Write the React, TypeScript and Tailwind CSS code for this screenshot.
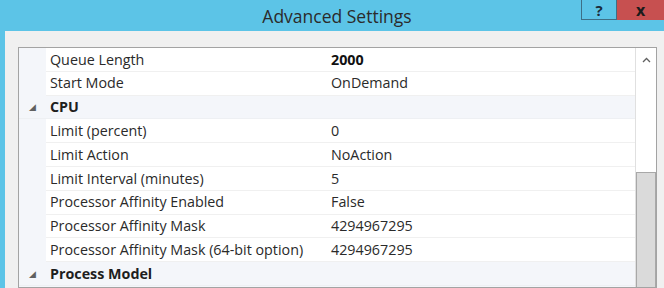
import React from "react";

type Row = { label: string; value?: string; bold?: boolean; category?: boolean };

const rows: Row[] = [
  { label: "Queue Length", value: "2000", bold: true },
  { label: "Start Mode", value: "OnDemand" },
  { label: "CPU", category: true },
  { label: "Limit (percent)", value: "0" },
  { label: "Limit Action", value: "NoAction" },
  { label: "Limit Interval (minutes)", value: "5" },
  { label: "Processor Affinity Enabled", value: "False" },
  { label: "Processor Affinity Mask", value: "4294967295" },
  { label: "Processor Affinity Mask (64-bit option)", value: "4294967295" },
  { label: "Process Model", category: true },
];

const font = { fontFamily: '"Open Sans", "Noto Sans", sans-serif' };

export default function App() {
  return (
    <div className="w-[664px] h-[288px] overflow-hidden bg-[#5cc4e7] flex flex-col" style={font}>
      {/* title bar */}
      <div className="relative h-[31px] shrink-0 flex items-center justify-center">
        <span className="text-[17.5px] text-[#2b2b2b] pl-[10px] pt-[2px]">Advanced Settings</span>
        <div className="absolute top-0 right-0 flex">
          <div className="w-[36px] h-[20px] border border-t-0 border-[#3d6f86] flex items-center justify-center text-[15px] font-bold text-[#1a2b3a] leading-[18px]">
            ?
          </div>
          <div className="w-[47px] h-[20px] bg-[#c75050] flex items-center justify-center text-[16px] font-bold text-[#1b1b1b] leading-[18px]">
            x
          </div>
        </div>
      </div>

      {/* body */}
      <div className="flex-1 ml-[5px] bg-[#f0f0f0] pt-[16px] pl-[13px] pr-[7px] flex flex-col">
        <div className="flex-1 border border-[#a3a3a3] bg-white flex">
          <div className="flex-1 flex flex-col">
            {rows.map((r, i) =>
              r.category ? (
                <div key={i} className="h-[23.8px] shrink-0 flex items-center bg-[#f4f6fa] border-b border-[#eef0f3]">
                  <div className="w-[27px] flex justify-end pr-[10px] text-[9px] text-[#606060] leading-none">◢</div>
                  <span className="pl-[4px] text-[14.3px] font-bold text-[#1e1e1e]">{r.label}</span>
                </div>
              ) : (
                <div key={i} className="h-[23.8px] shrink-0 flex items-center">
                  <div className="w-[27px] h-full bg-[#f4f6fa]" />
                  <div className="w-[285px] h-full flex items-center pl-[4px] border-b border-[#f0f0f0] text-[14.3px] text-[#2a2a2a] whitespace-nowrap">
                    {r.label}
                  </div>
                  <div
                    className={`flex-1 h-full flex items-center border-b border-[#f0f0f0] text-[14.3px] whitespace-nowrap ${
                      r.bold ? "font-bold text-[#111]" : "text-[#2a2a2a]"
                    }`}
                  >
                    {r.value}
                  </div>
                </div>
              )
            )}
            <div className="flex-1 bg-[#f4f6fa]" />
          </div>

          {/* scrollbar */}
          <div className="w-[21px] border-l border-[#e0e0e0] flex flex-col">
            <div className="h-[23px] flex items-center justify-center">
              <svg width="9" height="6" viewBox="0 0 9 6">
                <path d="M1 5 L4.5 1.5 L8 5" fill="none" stroke="#606060" strokeWidth="1.3" />
              </svg>
            </div>
            <div className="h-[101px]" />
            <div className="flex-1 bg-[#dadada] border border-[#a8a8a8] border-b-0" />
          </div>
        </div>
      </div>
    </div>
  );
}
